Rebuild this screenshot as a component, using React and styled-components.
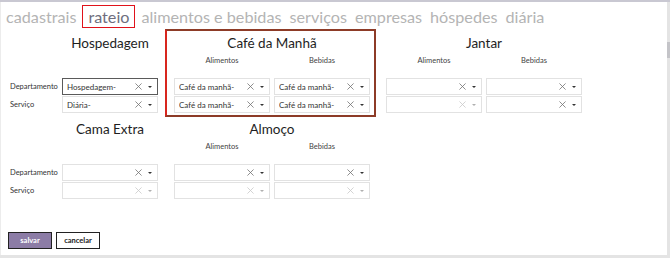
import React from "react";
import styled, { createGlobalStyle, css } from "styled-components";

const GlobalStyle = createGlobalStyle`
  html, body {
    margin: 0;
    padding: 0;
    background: #ffffff;
  }
  body {
    font-family: Lato, "Open Sans", sans-serif;
    color: #222;
  }
`;

const Page = styled.div`
  width: 670px;
  height: 258px;
  display: flex;
  flex-direction: column;
  border-top: 2px solid #c9c8d2;
  box-sizing: border-box;
  overflow: hidden;
`;

const Body = styled.div`
  flex: 1;
  display: flex;
`;

const Main = styled.div`
  flex: 1;
  display: flex;
  flex-direction: column;
  border-left: 1px solid #ececec;
`;

const ScrollTrack = styled.div`
  width: 3px;
  background: #e4e4e4;
  display: flex;
  flex-direction: column;
`;

const ScrollThumb = styled.div`
  margin-top: 40px;
  height: 16px;
  background: #c4c4c8;
`;

const BottomBar = styled.div`
  height: 3px;
  background: #e4e4e4;
`;

const Nav = styled.nav`
  display: flex;
  align-items: center;
  gap: 4px;
  padding: 2px 0 0 3px;
  height: 26px;
  box-sizing: border-box;
`;

const NavItem = styled.span`
  font-size: 16.2px;
  line-height: 21px;
  color: #b4b4b4;
  padding: 0 1px;
  border: 1px solid transparent;
  white-space: nowrap;
  ${(p) =>
    p.$active &&
    css`
      color: #6e6e7e;
      border-color: #e0121b;
      padding: 0 5px;
    `}
`;

const Block = styled.div`
  display: flex;
  gap: 16px;
  padding-left: 9px;
  padding-top: ${(p) => p.$top}px;
`;

const LabelColumn = styled.div`
  width: 52px;
  display: flex;
  flex-direction: column;
  padding-top: 45px;
  gap: 1px;
  margin-right: -16px;
`;

const RowLabel = styled.div`
  height: 17px;
  line-height: 17px;
  font-size: 7.5px;
  color: #333;
  white-space: nowrap;
`;

const Section = styled.div`
  position: relative;
  display: grid;
  grid-template-columns: repeat(${(p) => p.$cols}, 96px);
  column-gap: 4px;
  row-gap: 1px;
  grid-template-rows: 20px 23px 17px 17px;
  ${(p) =>
    p.$highlight &&
    css`
      &::before {
        content: "";
        position: absolute;
        top: -4px;
        left: -9px;
        right: -6px;
        bottom: -4px;
        border: 2px solid #8d3b27;
        border-left-color: #d8261e;
        pointer-events: none;
      }
    `}
`;

const Heading = styled.div`
  grid-column: 1 / -1;
  text-align: center;
  font-size: 13.5px;
  line-height: 20px;
  color: #1e1e1e;
  white-space: nowrap;
`;

const SubLabel = styled.div`
  align-self: start;
  text-align: center;
  font-size: 7.5px;
  line-height: 12px;
  color: #444;
  margin-top: 1px;
`;

const Select = styled.div`
  height: 17px;
  box-sizing: border-box;
  border: 1px solid ${(p) => (p.$focused ? "#5a5a5a" : "#e2e2e2")};
  display: flex;
  align-items: center;
  padding: 0 4px 0 4px;
  font-size: 8px;
  color: #333;
  background: #fff;
`;

const Value = styled.span`
  flex: 1;
  white-space: nowrap;
  overflow: hidden;
`;

const Clear = styled.svg`
  width: 7px;
  height: 7px;
  margin-right: 6px;
  stroke: ${(p) => (p.$dim ? "#c8c8c8" : "#707070")};
`;

const Caret = styled.span`
  width: 0;
  height: 0;
  border-left: 2px solid transparent;
  border-right: 2px solid transparent;
  border-top: 2.5px solid ${(p) => (p.$dim ? "#b0b0b0" : "#333")};
  margin-right: 1px;
`;

const Footer = styled.div`
  display: flex;
  gap: 4px;
  padding: 33px 0 0 7px;
`;

const Button = styled.button`
  width: 44px;
  height: 17px;
  box-sizing: border-box;
  border: 1.5px solid #222;
  font-family: Lato, sans-serif;
  font-size: 7.5px;
  font-weight: 700;
  padding: 0;
  background: ${(p) => (p.$primary ? "#8c7ca6" : "#ffffff")};
  color: ${(p) => (p.$primary ? "#ffffff" : "#222")};
`;

const Field = ({ value = "", focused, dimClear, dimCaret }) => (
  <Select $focused={focused}>
    <Value>{value}</Value>
    <Clear viewBox="0 0 8 8" $dim={dimClear} fill="none" strokeWidth="0.9">
      <path d="M0.5 0.5 L7.5 7.5 M7.5 0.5 L0.5 7.5" />
    </Clear>
    <Caret $dim={dimCaret} />
  </Select>
);

const navItems = [
  "cadastrais",
  "rateio",
  "alimentos e bebidas",
  "serviços",
  "empresas",
  "hóspedes",
  "diária",
];

const Labels = () => (
  <LabelColumn>
    <RowLabel>Departamento</RowLabel>
    <RowLabel>Serviço</RowLabel>
  </LabelColumn>
);

const SingleSection = ({ title, first, second }) => (
  <Section $cols={1}>
    <Heading>{title}</Heading>
    <SubLabel />
    <Field {...first} />
    <Field {...second} />
  </Section>
);

const DoubleSection = ({ title, highlight, fields }) => (
  <Section $cols={2} $highlight={highlight}>
    <Heading>{title}</Heading>
    <SubLabel>Alimentos</SubLabel>
    <SubLabel>Bebidas</SubLabel>
    {fields.map((f, i) => (
      <Field key={i} {...f} />
    ))}
  </Section>
);

const cafe = "Café da manhã-";

export default function App() {
  return (
    <>
      <GlobalStyle />
      <Page>
        <Body>
          <Main>
            <Nav>
              {navItems.map((item) => (
                <NavItem key={item} $active={item === "rateio"}>
                  {item}
                </NavItem>
              ))}
            </Nav>
            <Block $top={5}>
              <Labels />
              <SingleSection
                title="Hospedagem"
                first={{ value: "Hospedagem-", focused: true }}
                second={{ value: "Diária-" }}
              />
              <DoubleSection
                title="Café da Manhã"
                highlight
                fields={[
                  { value: cafe },
                  { value: cafe },
                  { value: cafe },
                  { value: cafe },
                ]}
              />
              <DoubleSection
                title="Jantar"
                fields={[{}, {}, { dimClear: true, dimCaret: true }, {}]}
              />
            </Block>
            <Block $top={6}>
              <Labels />
              <SingleSection
                title="Cama Extra"
                first={{}}
                second={{ dimClear: true, dimCaret: true }}
              />
              <DoubleSection
                title="Almoço"
                fields={[
                  {},
                  {},
                  { dimClear: true, dimCaret: true },
                  { dimClear: true, dimCaret: true },
                ]}
              />
            </Block>
            <Footer>
              <Button $primary>salvar</Button>
              <Button>cancelar</Button>
            </Footer>
          </Main>
          <ScrollTrack>
            <ScrollThumb />
          </ScrollTrack>
        </Body>
        <BottomBar />
      </Page>
    </>
  );
}
